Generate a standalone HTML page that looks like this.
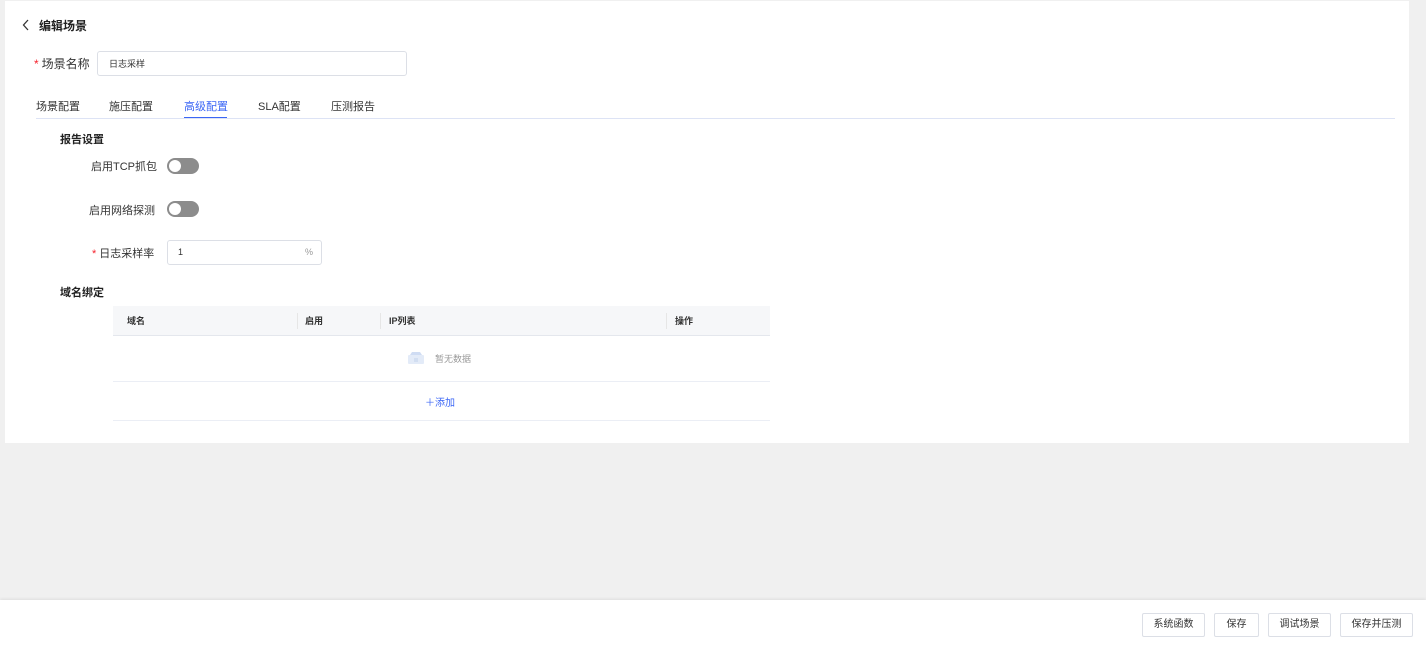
<!DOCTYPE html>
<html><head><meta charset="utf-8"><style>
*{box-sizing:border-box;margin:0;padding:0}
body{width:1426px;height:650px;background:#f0f0f0;font-family:"Liberation Sans","Noto Sans CJK SC",sans-serif;color:#333;position:relative;overflow:hidden;font-size:12px}
.card{position:absolute;left:5px;top:1px;width:1404px;height:442px;background:#fff}
.abs{position:absolute;white-space:nowrap}
.req{color:#f5222d;margin-right:3px}
.sw{position:absolute;width:32px;height:16px;border-radius:8px;background:#8c8c8c}
.sw:after{content:"";position:absolute;left:2px;top:2px;width:12px;height:12px;border-radius:50%;background:#fff}
.inp{position:absolute;border:1px solid #dcdfe6;border-radius:3px;background:#fff}
.footer{position:absolute;left:0;top:600px;width:1426px;height:50px;background:#fff;box-shadow:0 -1px 3px rgba(0,0,0,.08)}
.btn{position:absolute;top:13px;height:24px;border:1px solid #dcdfe6;border-radius:2px;font-size:10px;line-height:22px;text-align:center;color:#333}
</style></head><body>
<div class="card">
 <svg class="abs" style="left:17px;top:18px" width="8" height="12" viewBox="0 0 8 12"><path d="M6 1L1.5 6 6 11" fill="none" stroke="#333" stroke-width="1.3"/></svg>
 <div class="abs" style="left:34px;top:16px;font-size:12px;font-weight:bold;color:#222">编辑场景</div>
 <div class="abs" style="left:29px;top:54px;font-size:12px"><span class="req">*</span>场景名称</div>
 <div class="inp" style="left:92px;top:50px;width:310px;height:25px"><span class="abs" style="left:11px;top:5px;font-size:9px">日志采样</span></div>
 <div class="abs" style="left:31px;top:97px;font-size:11px">场景配置</div>
 <div class="abs" style="left:104px;top:97px;font-size:11px">施压配置</div>
 <div class="abs" style="left:179px;top:97px;font-size:11px;color:#3b66f5">高级配置</div>
 <div class="abs" style="left:179px;top:116px;width:43px;height:2px;background:#3b66f5"></div>
 <div class="abs" style="left:253px;top:97px;font-size:11px">SLA配置</div>
 <div class="abs" style="left:326px;top:97px;font-size:11px">压测报告</div>
 <div class="abs" style="left:31px;top:117px;width:1359px;height:1px;background:#dde3f5"></div>
 <div class="abs" style="left:55px;top:130px;font-size:11px;font-weight:bold;color:#222">报告设置</div>
 <div class="abs" style="left:86px;top:157px;font-size:11px">启用TCP抓包</div>
 <div class="sw" style="left:162px;top:157px"></div>
 <div class="abs" style="left:84px;top:201px;font-size:11px">启用网络探测</div>
 <div class="sw" style="left:162px;top:200px"></div>
 <div class="abs" style="left:87px;top:244px;font-size:11px"><span class="req">*</span>日志采样率</div>
 <div class="inp" style="left:162px;top:239px;width:155px;height:25px"><span class="abs" style="left:10px;top:6px;font-size:9px">1</span><span class="abs" style="left:137px;top:6px;font-size:9px;color:#999">%</span></div>
 <div class="abs" style="left:55px;top:283px;font-size:11px;font-weight:bold;color:#222">域名绑定</div>
 <div class="abs" style="left:108px;top:305px;width:657px;height:30px;background:#f6f7f9;border-bottom:1px solid #e4e7ed"></div>
 <div class="abs" style="left:292px;top:312px;width:1px;height:16px;background:#e6e6e6"></div>
 <div class="abs" style="left:375px;top:312px;width:1px;height:16px;background:#e6e6e6"></div>
 <div class="abs" style="left:661px;top:312px;width:1px;height:16px;background:#e6e6e6"></div>
 <div class="abs" style="left:122px;top:313px;font-size:9px;font-weight:bold">域名</div>
 <div class="abs" style="left:300px;top:313px;font-size:9px;font-weight:bold">启用</div>
 <div class="abs" style="left:384px;top:313px;font-size:9px;font-weight:bold">IP列表</div>
 <div class="abs" style="left:670px;top:313px;font-size:9px;font-weight:bold">操作</div>
 <svg class="abs" style="left:403px;top:351px" width="16" height="12" viewBox="0 0 16 12"><path d="M2 3L4 0H12L14 3Z" fill="#cfdcf3"/><rect x="0" y="3" width="16" height="9" rx="1" fill="#e3ebf8"/><path d="M6 7H10M6 9H10" stroke="#c2d0ea"/></svg>
 <div class="abs" style="left:430px;top:351px;font-size:9px;color:#999">暂无数据</div>
 <div class="abs" style="left:108px;top:380px;width:657px;height:1px;background:#ebeef5"></div>
 <div class="abs" style="left:420px;top:393px;font-size:10px;color:#3b66f5">＋添加</div>
 <div class="abs" style="left:108px;top:419px;width:657px;height:1px;background:#ebeef5"></div>
</div>
<div class="footer">
 <div class="btn" style="left:1142px;width:63px">系统函数</div>
 <div class="btn" style="left:1214px;width:45px">保存</div>
 <div class="btn" style="left:1268px;width:63px">调试场景</div>
 <div class="btn" style="left:1340px;width:73px">保存并压测</div>
</div>
</body></html>
